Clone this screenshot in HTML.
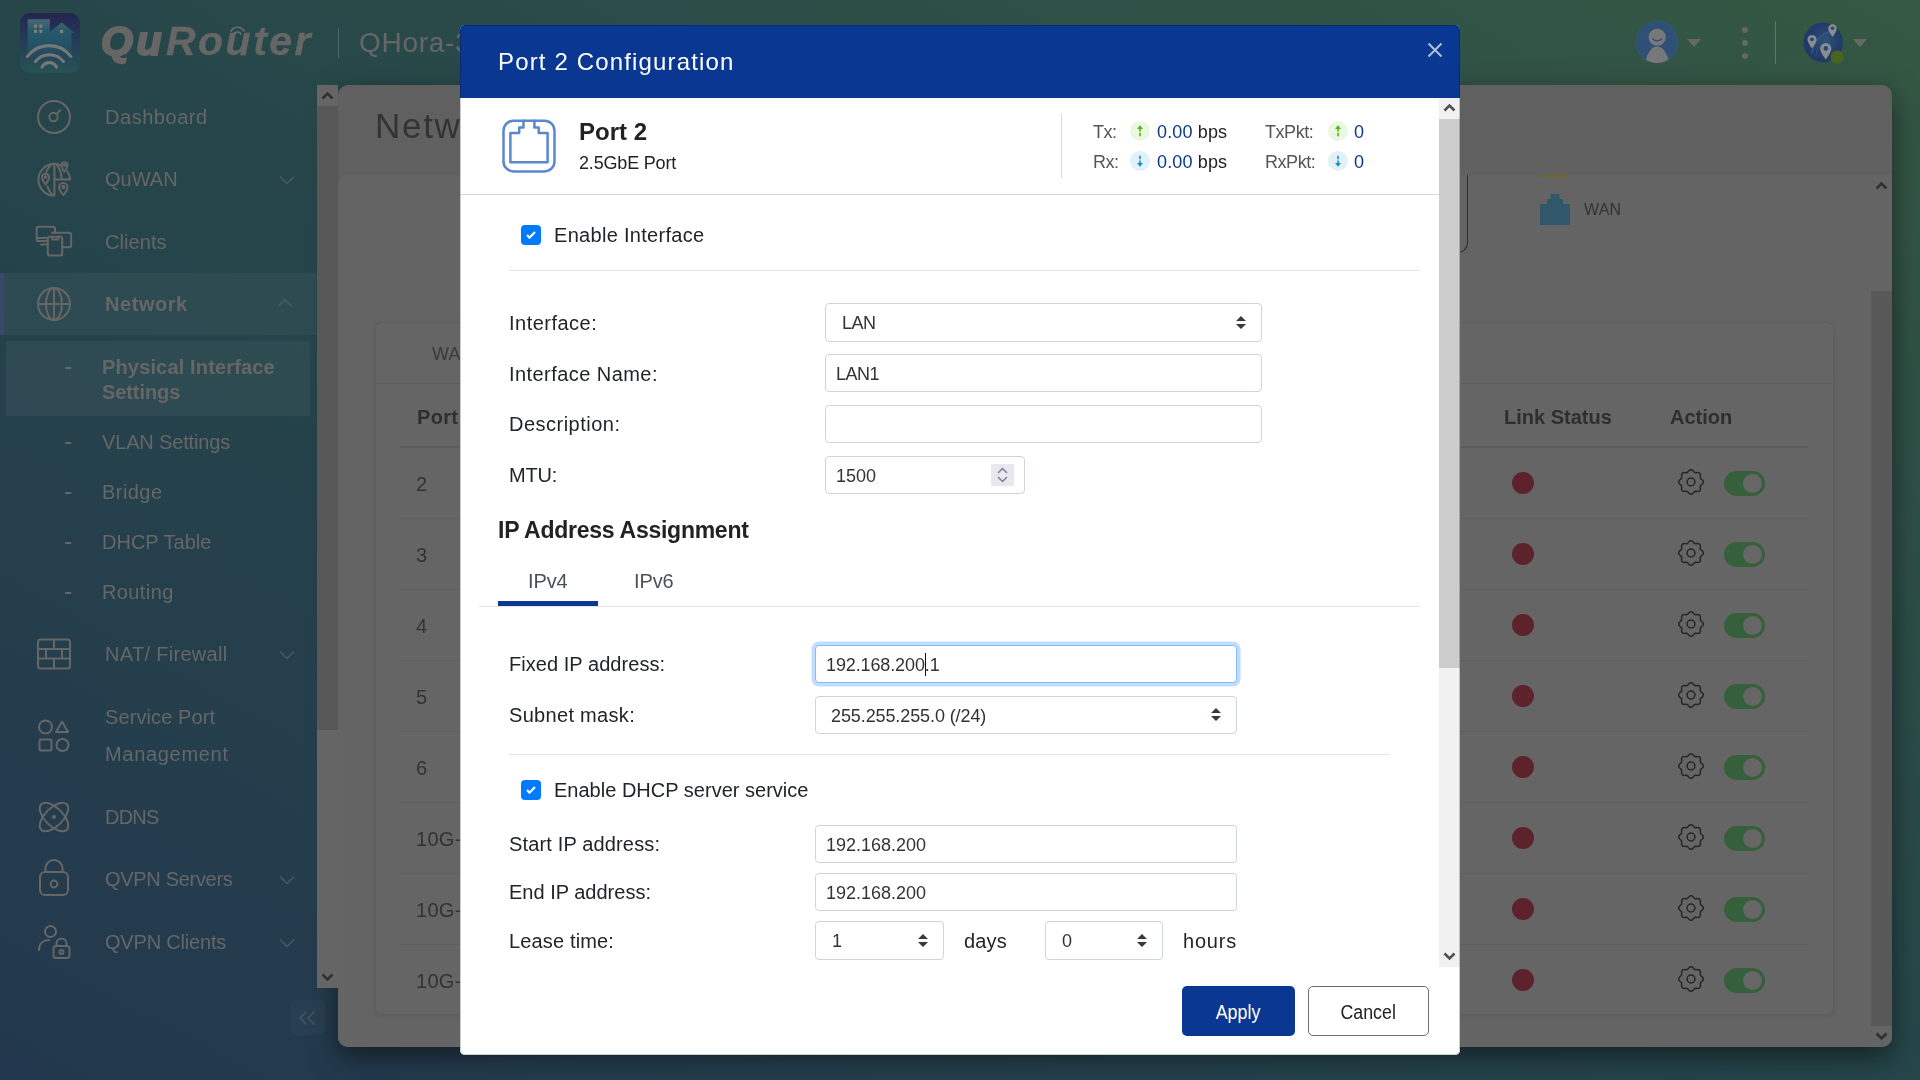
<!DOCTYPE html>
<html lang="en"><head><meta charset="utf-8"><title>QuRouter - Port 2 Configuration</title>
<style>
*{box-sizing:border-box;margin:0;padding:0}
html,body{width:1920px;height:1080px;overflow:hidden}
body{font-family:"Liberation Sans",sans-serif;position:relative;background:#26424b;color:#222}
.abs{position:absolute}
#bg{left:0;top:0;width:1920px;height:1080px;background:linear-gradient(to top right,#23384e 0%,#26464a 50%,#355843 100%)}
/* ---------- top bar ---------- */
.t{position:absolute;white-space:nowrap;line-height:1;will-change:transform}
/* ---------- sidebar ---------- */
.nav{color:#666;font-size:20px;letter-spacing:.55px}
.sub{color:#666;font-size:20px;letter-spacing:.3px}
/* ---------- main panel ---------- */
#panel{left:338px;top:85px;width:1554px;height:962px;background:#606060;border-radius:10px;box-shadow:0 10px 28px rgba(0,0,0,.5)}
#inner{left:338px;top:175px;width:1533px;height:872px;background:#646464;border-radius:10px 0 0 10px}
#card{left:375px;top:322px;width:1459px;height:693px;background:#656565;border:1px solid #5e5e5e;border-radius:6px;box-shadow:0 1px 4px rgba(0,0,0,.08)}
/* ---------- modal ---------- */
#modal{left:460px;top:25px;width:1000px;height:1030px;background:#fff;border-radius:5px;overflow:hidden}
#mhead{left:0;top:0;width:1000px;height:73px;background:#0a3791}
.lbl{font-size:20px;color:#212529;letter-spacing:.35px}
.inp{will-change:transform;position:absolute;height:38px;border:1px solid #ced4da;border-radius:4px;background:#fff;font-size:18px;color:#333;line-height:38px;padding-left:10px;white-space:nowrap}
.hr{position:absolute;height:1px;background:#e3e5e7}
.cb{position:absolute;width:20px;height:20px;border-radius:4px;background:#007bff}
.cb svg{display:block}
.car{position:absolute;right:15px;top:12px}
.btn{border-radius:5px;font-size:20px;text-align:center;line-height:50px}
.btn span{display:inline-block;transform:scaleX(.89);position:relative;top:1px}
</style></head><body>
<div id="bg" class="abs"></div>
<!--TOPBAR-->
<!-- logo icon -->
<svg class="abs" style="left:20px;top:13px" width="60" height="60" viewBox="0 0 60 60">
 <defs><linearGradient id="lg1" x1="0" y1="0" x2="0" y2="1"><stop offset="0" stop-color="#24254f"/><stop offset=".45" stop-color="#243b58"/><stop offset="1" stop-color="#265355"/></linearGradient>
 <linearGradient id="lg2" x1="0" y1="0" x2="0" y2="1"><stop offset="0" stop-color="#466a70"/><stop offset=".3" stop-color="#24596b"/><stop offset=".75" stop-color="#234d63"/><stop offset="1" stop-color="#244a5a" stop-opacity="0"/></linearGradient></defs>
 <rect width="60" height="60" rx="10" fill="url(#lg1)"/>
 <path d="M7.700 6.200h22.200v12.500l11.800-9.300 12.900 10.700h-3.100v28H7.700z" fill="url(#lg2)"/>
 <g fill="#857d7a"><rect x="14" y="11.500" width="3" height="3.200" rx=".8"/><rect x="19.300" y="11.500" width="3" height="3.200" rx=".8"/><rect x="14" y="16.800" width="3" height="3.200" rx=".8"/><rect x="19.300" y="16.800" width="3" height="3.200" rx=".8"/><rect x="40" y="16.800" width="3.200" height="3.400" rx=".8"/></g>
 <g fill="none" stroke="#767777" stroke-width="3.100" stroke-linecap="round"><path d="M7.400 43.400a27.200 27.200 0 0 1 43.400 0"/><path d="M15.300 48.600a17.900 17.900 0 0 1 28.200 0"/><path d="M22 54.200a8 8 0 0 1 14.500 0"/></g>
</svg>
<div id="logo" class="t" style="left:101px;top:21px;font-size:41px;font-weight:700;font-style:italic;color:#666;letter-spacing:2.5px"><span id="lq" style="-webkit-text-stroke:2.200px #666;letter-spacing:3.5px">Qu</span><span id="lr" style="-webkit-text-stroke:.3px #666;margin-left:1px">Ro<span id="lu">u</span>ter</span></div>
<svg class="abs" style="left:222px;top:23px" width="30" height="14" viewBox="0 0 30 14"><g fill="none" stroke="#6c6f70" stroke-width="1.6" stroke-linecap="round"><path d="M9 8a7.500 7.500 0 0 1 13 0"/><path d="M12 11a4 4 0 0 1 7 0"/></g></svg>
<div class="abs" style="left:338px;top:28px;width:1px;height:30px;background:#4d6668"></div>
<div class="t" style="left:359px;top:29px;font-size:28px;color:#666;letter-spacing:.7px">QHora-301W</div>
<!-- right icons -->
<svg class="abs" style="left:1634px;top:19px" width="46" height="46" viewBox="0 0 46 46">
 <defs><clipPath id="cu"><circle cx="23" cy="23" r="21"/></clipPath><radialGradient id="ug" cx=".5" cy=".5" r=".5"><stop offset="0" stop-color="#2f4f75"/><stop offset=".9" stop-color="#2f5077"/><stop offset="1" stop-color="#315a7a" stop-opacity=".75"/></radialGradient></defs>
 <circle cx="23" cy="23" r="21.500" fill="url(#ug)"/>
 <g clip-path="url(#cu)" fill="#777879"><circle cx="23.200" cy="18.200" r="8.600"/><path d="M23.200 27.500c5.500 0 9 4.500 12.800 17.500h-25.600c3.800-13 7.300-17.500 12.800-17.500z"/></g>
 <path d="M18.800 20q4.400 3.800 8.800 0" fill="none" stroke="#2f4f75" stroke-width="1.300" stroke-linecap="round"/>
</svg>
<svg class="abs" style="left:1687px;top:39px" width="14" height="8" viewBox="0 0 14 8"><path d="M0 0h14l-7 8z" fill="#646966"/></svg>
<div class="abs" style="left:1742px;top:27px;width:6px;height:6px;border-radius:3px;background:#666"></div>
<div class="abs" style="left:1742px;top:40px;width:6px;height:6px;border-radius:3px;background:#666"></div>
<div class="abs" style="left:1742px;top:53px;width:6px;height:6px;border-radius:3px;background:#666"></div>
<div class="abs" style="left:1775px;top:21px;width:1px;height:43px;background:#66756b"></div>
<svg class="abs" style="left:1801px;top:20px" width="46" height="46" viewBox="0 0 46 46">
 <defs><radialGradient id="gg" cx=".55" cy=".45" r=".6"><stop offset="0" stop-color="#2a5478"/><stop offset=".55" stop-color="#243f6c"/><stop offset="1" stop-color="#1f3662"/></radialGradient></defs>
 <circle cx="22.200" cy="22.400" r="19.800" fill="url(#gg)"/>
 <path d="M11 33c2-12 9-20 22-22" fill="none" stroke="#36587f" stroke-width="1.600" stroke-linecap="round"/>
 <path d="M15 36c1-10 7-17 17-19" fill="none" stroke="#2f4f78" stroke-width="1.200" stroke-linecap="round"/>
 <g fill="#8a8c8e"><path d="M6.500 19.500a4.500 4.500 0 1 1 9 0c0 3.200-4.500 9-4.500 9s-4.500-5.800-4.500-9z"/><path d="M27.200 8.500a4.300 4.300 0 1 1 8.600 0c0 3-4.300 8.300-4.300 8.300s-4.300-5.300-4.300-8.300z"/><path d="M19.200 28.600a5.600 5.600 0 1 1 11.200 0c0 4-5.600 11-5.600 11s-5.600-7-5.600-11z"/></g>
 <g fill="#24487a"><circle cx="11" cy="19.300" r="1.900"/><circle cx="31.500" cy="8.300" r="1.800"/><circle cx="24.800" cy="28.400" r="2.300"/></g>
 <circle cx="36.200" cy="37" r="6.600" fill="#48651f"/>
</svg>
<svg class="abs" style="left:1853px;top:39px" width="14" height="8" viewBox="0 0 14 8"><path d="M0 0h14l-7 8z" fill="#646966"/></svg>
<!--/TOPBAR-->
<!--SIDEBAR-->
<div class="abs" style="left:0;top:273px;width:317px;height:62px;background:rgba(255,255,255,.04)"></div>
<div class="abs" style="left:0;top:273px;width:4px;height:62px;background:#3a4768"></div>
<div class="abs" style="left:6px;top:341px;width:304px;height:75px;background:rgba(255,255,255,.045)"></div>
<!-- icons -->
<svg class="abs" style="left:34px;top:97px" width="40" height="40" viewBox="0 0 40 40" fill="none" stroke="#666" stroke-width="2" stroke-linecap="round"><circle cx="20" cy="20" r="16"/><circle cx="19.500" cy="20" r="4.200"/><path d="M22.500 17l4-4"/></svg>
<svg class="abs" style="left:34px;top:159px" width="42" height="40" viewBox="0 0 42 40" fill="none" stroke="#666" stroke-width="2" stroke-linecap="round" stroke-linejoin="round"><path d="M20.400 4.800a15.900 15.900 0 0 0 0 31.800z"/><path d="M17.500 5.500c-3.500 3-5 6-5.300 8.500M13.500 27.500c.8 3 2.200 5.700 4.500 8"/><path d="M20.400 4.800c2.500 0 5 .6 7 1.700M33.300 12.300c1.800 2.400 2.800 5.200 3 8.300h-15.900"/><path d="M22.500 5.500c3 3.500 5 8.500 5.200 15"/><path d="M8.100 18.200a3.500 3.500 0 1 1 7 0c0 2.700-3.500 7.200-3.500 7.200s-3.500-4.500-3.500-7.200z"/><circle cx="11.600" cy="18.200" r=".9"/><path d="M27.300 6.300a3.100 3.100 0 1 1 6.200 0c0 2.400-3.100 6.400-3.100 6.400s-3.100-4-3.100-6.400z"/><circle cx="30.400" cy="6.300" r=".8"/><path d="M25.100 28.200a4.200 4.200 0 1 1 8.400 0c0 3.200-4.200 7.800-4.200 7.800s-4.200-4.600-4.200-7.800z"/><circle cx="29.300" cy="28.200" r="1.100"/></svg>
<svg class="abs" style="left:34px;top:223px" width="40" height="36" viewBox="0 0 40 36" fill="none" stroke="#666" stroke-width="2" stroke-linecap="round" stroke-linejoin="round"><path d="M13.500 18H4.500a1.800 1.800 0 0 1-1.800-1.800V5.500a1.800 1.800 0 0 1 1.800-1.800h14.700a1.800 1.800 0 0 1 1.800 1.800v4"/><path d="M3 15h10.500"/><path d="M7 21.400h6.500"/><path d="M18 9.800h17.300a1.800 1.800 0 0 1 1.800 1.800v10.800a1.800 1.800 0 0 1-1.800 1.800h-6.800"/><rect x="13.800" y="13.700" width="14.400" height="18.900" rx="2"/><path d="M18.200 13.700v2.700h6.100v-2.700"/></svg>
<svg class="abs" style="left:34px;top:284px" width="40" height="40" viewBox="0 0 40 40" fill="none" stroke="#666" stroke-width="2" stroke-linecap="round"><circle cx="20" cy="20" r="16"/><ellipse cx="20" cy="20" rx="8" ry="16"/><path d="M20 4v32M4 20h32"/></svg>
<svg class="abs" style="left:34px;top:635px" width="40" height="38" viewBox="0 0 40 38" fill="none" stroke="#666" stroke-width="2" stroke-linecap="round" stroke-linejoin="round"><rect x="4" y="4.500" width="32" height="29" rx="2.500"/><path d="M4 14h32M4 23.500h32M20 4.500V14M12 14v9.500M28 14v9.500M20 23.500v10"/></svg>
<svg class="abs" style="left:34px;top:716px" width="40" height="40" viewBox="0 0 40 40" fill="none" stroke="#666" stroke-width="2" stroke-linecap="round" stroke-linejoin="round"><circle cx="11.500" cy="11" r="6.500"/><path d="M28 5.500l6 10.500H22z"/><rect x="5.500" y="23.500" width="12" height="11" rx="1.500"/><circle cx="28.500" cy="29" r="6"/></svg>
<svg class="abs" style="left:34px;top:797px" width="40" height="40" viewBox="0 0 40 40" fill="none" stroke="#666" stroke-width="2"><ellipse cx="20" cy="20" rx="18" ry="9" transform="rotate(45 20 20)"/><ellipse cx="20" cy="20" rx="18" ry="9" transform="rotate(-45 20 20)"/><circle cx="20" cy="20" r="2" fill="#666" stroke="none"/></svg>
<svg class="abs" style="left:34px;top:857px" width="40" height="42" viewBox="0 0 40 42" fill="none" stroke="#666" stroke-width="2" stroke-linecap="round"><rect x="6" y="15" width="28" height="23" rx="5"/><path d="M11.500 15v-3.500a8.500 8.500 0 0 1 17 0V15"/><circle cx="20" cy="27" r="3.400"/></svg>
<svg class="abs" style="left:34px;top:922px" width="42" height="40" viewBox="0 0 42 40" fill="none" stroke="#666" stroke-width="2" stroke-linecap="round"><circle cx="16.500" cy="9.500" r="5.500"/><path d="M5 28c0-7 4.500-10 10-10"/><rect x="19.500" y="24" width="16" height="12" rx="2.500"/><path d="M22.500 24v-2.500a5 5 0 0 1 10 0V24"/><circle cx="27.500" cy="30" r="2"/></svg>
<!-- chevrons -->
<svg class="abs" style="left:279px;top:175px" width="16" height="10" viewBox="0 0 16 10" fill="none" stroke="#4b5b5f" stroke-width="1.500"><path d="M1 1.500l7 7 7-7"/></svg>
<svg class="abs" style="left:277px;top:297.500px" width="16" height="10" viewBox="0 0 16 10" fill="none" stroke="#4b5b5f" stroke-width="1.500"><path d="M1 8.500l7-7 7 7"/></svg>
<svg class="abs" style="left:279px;top:650px" width="16" height="10" viewBox="0 0 16 10" fill="none" stroke="#4b5b5f" stroke-width="1.500"><path d="M1 1.500l7 7 7-7"/></svg>
<svg class="abs" style="left:279px;top:875px" width="16" height="10" viewBox="0 0 16 10" fill="none" stroke="#4b5b5f" stroke-width="1.500"><path d="M1 1.500l7 7 7-7"/></svg>
<svg class="abs" style="left:279px;top:938px" width="16" height="10" viewBox="0 0 16 10" fill="none" stroke="#4b5b5f" stroke-width="1.500"><path d="M1 1.500l7 7 7-7"/></svg>
<!-- labels -->
<div class="t nav" style="left:105px;top:107px;letter-spacing:0.54px">Dashboard</div>
<div class="t nav" style="left:105px;top:169px;letter-spacing:0.02px">QuWAN</div>
<div class="t nav" style="left:105px;top:232px;letter-spacing:0.08px">Clients</div>
<div class="t nav" style="left:105px;top:294px;font-weight:700;letter-spacing:0.55px">Network</div>
<div class="t sub" style="left:64px;top:354px;font-size:25px">-</div>
<div class="t sub" style="left:102px;top:357px;font-weight:700;letter-spacing:0.15px">Physical Interface</div>
<div class="t sub" style="left:102px;top:382px;font-weight:700;letter-spacing:-0.09px">Settings</div>
<div class="t sub" style="left:64px;top:429px;font-size:25px">-</div><div class="t sub" style="left:102px;top:432px;letter-spacing:-0.15px">VLAN Settings</div>
<div class="t sub" style="left:64px;top:479px;font-size:25px">-</div><div class="t sub" style="left:102px;top:482px;letter-spacing:0.44px">Bridge</div>
<div class="t sub" style="left:64px;top:529px;font-size:25px">-</div><div class="t sub" style="left:102px;top:532px;letter-spacing:-0.0px">DHCP Table</div>
<div class="t sub" style="left:64px;top:579px;font-size:25px">-</div><div class="t sub" style="left:102px;top:582px;letter-spacing:0.39px">Routing</div>
<div class="t nav" style="left:105px;top:644px;letter-spacing:0.31px">NAT/ Firewall</div>
<div class="t nav" style="left:105px;top:707px;letter-spacing:0.1px">Service Port</div>
<div class="t nav" style="left:105px;top:744px;letter-spacing:0.69px">Management</div>
<div class="t nav" style="left:105px;top:807px;letter-spacing:-0.79px">DDNS</div>
<div class="t nav" style="left:105px;top:869px;letter-spacing:-0.31px">QVPN Servers</div>
<div class="t nav" style="left:105px;top:932px;letter-spacing:-0.19px">QVPN Clients</div>
<!-- collapse -->
<div class="abs" style="left:291px;top:1000px;width:34px;height:35px;border-radius:5px;background:rgba(255,255,255,.025)"></div>
<svg class="abs" style="left:298px;top:1010px" width="20" height="16" viewBox="0 0 20 16" fill="none" stroke="#41565f" stroke-width="1.500"><path d="M8.500 1.500l-6.500 6.500 6.500 6.500M16.500 1.500l-6.500 6.500 6.500 6.500"/></svg>
<!--/SIDEBAR-->
<!--MAIN-->
<div id="panel" class="abs"></div><div id="inner" class="abs"></div>
<div class="t" style="left:375px;top:108px;font-size:35px;color:#333;letter-spacing:1.7px">Network</div>
<div class="abs" style="left:1871px;top:175px;width:21px;height:872px;background:#646464;border-radius:0 0 10px 0"></div>
<div class="abs" style="left:1871px;top:291px;width:21px;height:735px;background:#585858"></div>
<svg class="abs" style="left:1875px;top:180px" width="13" height="10" viewBox="0 0 13 10" fill="none" stroke="#303030" stroke-width="2.600"><path d="M1.500 8.500l5-5 5 5"/></svg>
<svg class="abs" style="left:1875px;top:1032px" width="13" height="10" viewBox="0 0 13 10" fill="none" stroke="#303030" stroke-width="2.600"><path d="M1.500 1.500l5 5 5-5"/></svg>
<div class="abs" style="left:1300px;top:175px;width:168px;height:78px;border:1px solid #2f2f2f;border-radius:0 0 10px 0;border-top:0;border-left:0"></div>
<div class="abs" style="left:1540px;top:175px;width:30px;height:2px;background:#6e6524"></div>
<svg class="abs" style="left:1540px;top:194px" width="30" height="31" viewBox="0 0 30 31"><path d="M10.500 0h9v5h3.500v5h7v21H0V10h7V5h3.500z" fill="#30586a"/></svg>
<div class="t" style="left:1584px;top:202px;font-size:16px;color:#333;letter-spacing:.2px">WAN</div>
<div id="card" class="abs"></div>
<div class="abs" style="left:376px;top:383px;width:1457px;height:1px;background:#5c5c5c"></div>
<div class="t" style="left:432px;top:345px;font-size:18px;color:#3a3a3a;letter-spacing:.3px">WAN</div>
<div class="t" style="left:417px;top:407px;font-size:20px;font-weight:700;color:#2e2e2e;letter-spacing:.3px">Port</div>
<div class="t" style="left:1504px;top:407px;font-size:20px;font-weight:700;color:#2e2e2e">Link Status</div>
<div class="t" style="left:1670px;top:407px;font-size:20px;font-weight:700;color:#2e2e2e">Action</div>
<div class="abs" style="left:400px;top:446px;width:1408px;height:2px;background:#5c5c5c"></div>
<div class="t" style="left:416px;top:474px;font-size:20px;color:#333;letter-spacing:.3px">2</div>
<div class="abs" style="left:1512px;top:472px;width:22px;height:22px;border-radius:11px;background:#5c232c"></div>
<svg class="abs" style="left:1675.900px;top:467.200px" width="30" height="30" viewBox="0 0 30 30" fill="none" stroke="#262626" stroke-width="1.500" stroke-linejoin="round"><path d="M15.00 2.65L15.80 2.82L16.54 3.28L17.20 3.92L17.79 4.59L18.34 5.16L18.92 5.53L19.60 5.68L20.39 5.67L21.28 5.60L22.20 5.62L23.05 5.82L23.73 6.27L24.18 6.95L24.38 7.80L24.40 8.72L24.33 9.61L24.32 10.40L24.47 11.08L24.84 11.66L25.41 12.21L26.08 12.80L26.72 13.46L27.18 14.20L27.35 15.00L27.18 15.80L26.72 16.54L26.08 17.20L25.41 17.79L24.84 18.34L24.47 18.92L24.32 19.60L24.33 20.39L24.40 21.28L24.38 22.20L24.18 23.05L23.73 23.73L23.05 24.18L22.20 24.38L21.28 24.40L20.39 24.33L19.60 24.32L18.92 24.47L18.34 24.84L17.79 25.41L17.20 26.08L16.54 26.72L15.80 27.18L15.00 27.35L14.20 27.18L13.46 26.72L12.80 26.08L12.21 25.41L11.66 24.84L11.08 24.47L10.40 24.32L9.61 24.33L8.72 24.40L7.80 24.38L6.95 24.18L6.27 23.73L5.82 23.05L5.62 22.20L5.60 21.28L5.67 20.39L5.68 19.60L5.53 18.92L5.16 18.34L4.59 17.79L3.92 17.20L3.28 16.54L2.82 15.80L2.65 15.00L2.82 14.20L3.28 13.46L3.92 12.80L4.59 12.21L5.16 11.66L5.53 11.08L5.68 10.40L5.67 9.61L5.60 8.72L5.62 7.80L5.82 6.95L6.27 6.27L6.95 5.82L7.80 5.62L8.72 5.60L9.61 5.67L10.40 5.68L11.08 5.53L11.66 5.16L12.21 4.59L12.80 3.92L13.46 3.28L14.20 2.82z"/><circle cx="15" cy="15" r="3.900"/></svg>
<div class="abs" style="left:1724px;top:471px;width:41px;height:25px;border-radius:13px;background:#365f3b"><div class="abs" style="left:19px;top:3px;width:19px;height:19px;border-radius:10px;background:#666"></div></div>
<div class="abs" style="left:400px;top:518px;width:1408px;height:1px;background:#5d5d5d"></div>
<div class="t" style="left:416px;top:545px;font-size:20px;color:#333;letter-spacing:.3px">3</div>
<div class="abs" style="left:1512px;top:543px;width:22px;height:22px;border-radius:11px;background:#5c232c"></div>
<svg class="abs" style="left:1675.900px;top:538.200px" width="30" height="30" viewBox="0 0 30 30" fill="none" stroke="#262626" stroke-width="1.500" stroke-linejoin="round"><path d="M15.00 2.65L15.80 2.82L16.54 3.28L17.20 3.92L17.79 4.59L18.34 5.16L18.92 5.53L19.60 5.68L20.39 5.67L21.28 5.60L22.20 5.62L23.05 5.82L23.73 6.27L24.18 6.95L24.38 7.80L24.40 8.72L24.33 9.61L24.32 10.40L24.47 11.08L24.84 11.66L25.41 12.21L26.08 12.80L26.72 13.46L27.18 14.20L27.35 15.00L27.18 15.80L26.72 16.54L26.08 17.20L25.41 17.79L24.84 18.34L24.47 18.92L24.32 19.60L24.33 20.39L24.40 21.28L24.38 22.20L24.18 23.05L23.73 23.73L23.05 24.18L22.20 24.38L21.28 24.40L20.39 24.33L19.60 24.32L18.92 24.47L18.34 24.84L17.79 25.41L17.20 26.08L16.54 26.72L15.80 27.18L15.00 27.35L14.20 27.18L13.46 26.72L12.80 26.08L12.21 25.41L11.66 24.84L11.08 24.47L10.40 24.32L9.61 24.33L8.72 24.40L7.80 24.38L6.95 24.18L6.27 23.73L5.82 23.05L5.62 22.20L5.60 21.28L5.67 20.39L5.68 19.60L5.53 18.92L5.16 18.34L4.59 17.79L3.92 17.20L3.28 16.54L2.82 15.80L2.65 15.00L2.82 14.20L3.28 13.46L3.92 12.80L4.59 12.21L5.16 11.66L5.53 11.08L5.68 10.40L5.67 9.61L5.60 8.72L5.62 7.80L5.82 6.95L6.27 6.27L6.95 5.82L7.80 5.62L8.72 5.60L9.61 5.67L10.40 5.68L11.08 5.53L11.66 5.16L12.21 4.59L12.80 3.92L13.46 3.28L14.20 2.82z"/><circle cx="15" cy="15" r="3.900"/></svg>
<div class="abs" style="left:1724px;top:542px;width:41px;height:25px;border-radius:13px;background:#365f3b"><div class="abs" style="left:19px;top:3px;width:19px;height:19px;border-radius:10px;background:#666"></div></div>
<div class="abs" style="left:400px;top:589px;width:1408px;height:1px;background:#5d5d5d"></div>
<div class="t" style="left:416px;top:616px;font-size:20px;color:#333;letter-spacing:.3px">4</div>
<div class="abs" style="left:1512px;top:614px;width:22px;height:22px;border-radius:11px;background:#5c232c"></div>
<svg class="abs" style="left:1675.900px;top:609.200px" width="30" height="30" viewBox="0 0 30 30" fill="none" stroke="#262626" stroke-width="1.500" stroke-linejoin="round"><path d="M15.00 2.65L15.80 2.82L16.54 3.28L17.20 3.92L17.79 4.59L18.34 5.16L18.92 5.53L19.60 5.68L20.39 5.67L21.28 5.60L22.20 5.62L23.05 5.82L23.73 6.27L24.18 6.95L24.38 7.80L24.40 8.72L24.33 9.61L24.32 10.40L24.47 11.08L24.84 11.66L25.41 12.21L26.08 12.80L26.72 13.46L27.18 14.20L27.35 15.00L27.18 15.80L26.72 16.54L26.08 17.20L25.41 17.79L24.84 18.34L24.47 18.92L24.32 19.60L24.33 20.39L24.40 21.28L24.38 22.20L24.18 23.05L23.73 23.73L23.05 24.18L22.20 24.38L21.28 24.40L20.39 24.33L19.60 24.32L18.92 24.47L18.34 24.84L17.79 25.41L17.20 26.08L16.54 26.72L15.80 27.18L15.00 27.35L14.20 27.18L13.46 26.72L12.80 26.08L12.21 25.41L11.66 24.84L11.08 24.47L10.40 24.32L9.61 24.33L8.72 24.40L7.80 24.38L6.95 24.18L6.27 23.73L5.82 23.05L5.62 22.20L5.60 21.28L5.67 20.39L5.68 19.60L5.53 18.92L5.16 18.34L4.59 17.79L3.92 17.20L3.28 16.54L2.82 15.80L2.65 15.00L2.82 14.20L3.28 13.46L3.92 12.80L4.59 12.21L5.16 11.66L5.53 11.08L5.68 10.40L5.67 9.61L5.60 8.72L5.62 7.80L5.82 6.95L6.27 6.27L6.95 5.82L7.80 5.62L8.72 5.60L9.61 5.67L10.40 5.68L11.08 5.53L11.66 5.16L12.21 4.59L12.80 3.92L13.46 3.28L14.20 2.82z"/><circle cx="15" cy="15" r="3.900"/></svg>
<div class="abs" style="left:1724px;top:613px;width:41px;height:25px;border-radius:13px;background:#365f3b"><div class="abs" style="left:19px;top:3px;width:19px;height:19px;border-radius:10px;background:#666"></div></div>
<div class="abs" style="left:400px;top:660px;width:1408px;height:1px;background:#5d5d5d"></div>
<div class="t" style="left:416px;top:687px;font-size:20px;color:#333;letter-spacing:.3px">5</div>
<div class="abs" style="left:1512px;top:685px;width:22px;height:22px;border-radius:11px;background:#5c232c"></div>
<svg class="abs" style="left:1675.900px;top:680.200px" width="30" height="30" viewBox="0 0 30 30" fill="none" stroke="#262626" stroke-width="1.500" stroke-linejoin="round"><path d="M15.00 2.65L15.80 2.82L16.54 3.28L17.20 3.92L17.79 4.59L18.34 5.16L18.92 5.53L19.60 5.68L20.39 5.67L21.28 5.60L22.20 5.62L23.05 5.82L23.73 6.27L24.18 6.95L24.38 7.80L24.40 8.72L24.33 9.61L24.32 10.40L24.47 11.08L24.84 11.66L25.41 12.21L26.08 12.80L26.72 13.46L27.18 14.20L27.35 15.00L27.18 15.80L26.72 16.54L26.08 17.20L25.41 17.79L24.84 18.34L24.47 18.92L24.32 19.60L24.33 20.39L24.40 21.28L24.38 22.20L24.18 23.05L23.73 23.73L23.05 24.18L22.20 24.38L21.28 24.40L20.39 24.33L19.60 24.32L18.92 24.47L18.34 24.84L17.79 25.41L17.20 26.08L16.54 26.72L15.80 27.18L15.00 27.35L14.20 27.18L13.46 26.72L12.80 26.08L12.21 25.41L11.66 24.84L11.08 24.47L10.40 24.32L9.61 24.33L8.72 24.40L7.80 24.38L6.95 24.18L6.27 23.73L5.82 23.05L5.62 22.20L5.60 21.28L5.67 20.39L5.68 19.60L5.53 18.92L5.16 18.34L4.59 17.79L3.92 17.20L3.28 16.54L2.82 15.80L2.65 15.00L2.82 14.20L3.28 13.46L3.92 12.80L4.59 12.21L5.16 11.66L5.53 11.08L5.68 10.40L5.67 9.61L5.60 8.72L5.62 7.80L5.82 6.95L6.27 6.27L6.95 5.82L7.80 5.62L8.72 5.60L9.61 5.67L10.40 5.68L11.08 5.53L11.66 5.16L12.21 4.59L12.80 3.92L13.46 3.28L14.20 2.82z"/><circle cx="15" cy="15" r="3.900"/></svg>
<div class="abs" style="left:1724px;top:684px;width:41px;height:25px;border-radius:13px;background:#365f3b"><div class="abs" style="left:19px;top:3px;width:19px;height:19px;border-radius:10px;background:#666"></div></div>
<div class="abs" style="left:400px;top:731px;width:1408px;height:1px;background:#5d5d5d"></div>
<div class="t" style="left:416px;top:758px;font-size:20px;color:#333;letter-spacing:.3px">6</div>
<div class="abs" style="left:1512px;top:756px;width:22px;height:22px;border-radius:11px;background:#5c232c"></div>
<svg class="abs" style="left:1675.900px;top:751.200px" width="30" height="30" viewBox="0 0 30 30" fill="none" stroke="#262626" stroke-width="1.500" stroke-linejoin="round"><path d="M15.00 2.65L15.80 2.82L16.54 3.28L17.20 3.92L17.79 4.59L18.34 5.16L18.92 5.53L19.60 5.68L20.39 5.67L21.28 5.60L22.20 5.62L23.05 5.82L23.73 6.27L24.18 6.95L24.38 7.80L24.40 8.72L24.33 9.61L24.32 10.40L24.47 11.08L24.84 11.66L25.41 12.21L26.08 12.80L26.72 13.46L27.18 14.20L27.35 15.00L27.18 15.80L26.72 16.54L26.08 17.20L25.41 17.79L24.84 18.34L24.47 18.92L24.32 19.60L24.33 20.39L24.40 21.28L24.38 22.20L24.18 23.05L23.73 23.73L23.05 24.18L22.20 24.38L21.28 24.40L20.39 24.33L19.60 24.32L18.92 24.47L18.34 24.84L17.79 25.41L17.20 26.08L16.54 26.72L15.80 27.18L15.00 27.35L14.20 27.18L13.46 26.72L12.80 26.08L12.21 25.41L11.66 24.84L11.08 24.47L10.40 24.32L9.61 24.33L8.72 24.40L7.80 24.38L6.95 24.18L6.27 23.73L5.82 23.05L5.62 22.20L5.60 21.28L5.67 20.39L5.68 19.60L5.53 18.92L5.16 18.34L4.59 17.79L3.92 17.20L3.28 16.54L2.82 15.80L2.65 15.00L2.82 14.20L3.28 13.46L3.92 12.80L4.59 12.21L5.16 11.66L5.53 11.08L5.68 10.40L5.67 9.61L5.60 8.72L5.62 7.80L5.82 6.95L6.27 6.27L6.95 5.82L7.80 5.62L8.72 5.60L9.61 5.67L10.40 5.68L11.08 5.53L11.66 5.16L12.21 4.59L12.80 3.92L13.46 3.28L14.20 2.82z"/><circle cx="15" cy="15" r="3.900"/></svg>
<div class="abs" style="left:1724px;top:755px;width:41px;height:25px;border-radius:13px;background:#365f3b"><div class="abs" style="left:19px;top:3px;width:19px;height:19px;border-radius:10px;background:#666"></div></div>
<div class="abs" style="left:400px;top:802px;width:1408px;height:1px;background:#5d5d5d"></div>
<div class="t" style="left:416px;top:829px;font-size:20px;color:#333;letter-spacing:.3px">10G-1</div>
<div class="abs" style="left:1512px;top:827px;width:22px;height:22px;border-radius:11px;background:#5c232c"></div>
<svg class="abs" style="left:1675.900px;top:822.200px" width="30" height="30" viewBox="0 0 30 30" fill="none" stroke="#262626" stroke-width="1.500" stroke-linejoin="round"><path d="M15.00 2.65L15.80 2.82L16.54 3.28L17.20 3.92L17.79 4.59L18.34 5.16L18.92 5.53L19.60 5.68L20.39 5.67L21.28 5.60L22.20 5.62L23.05 5.82L23.73 6.27L24.18 6.95L24.38 7.80L24.40 8.72L24.33 9.61L24.32 10.40L24.47 11.08L24.84 11.66L25.41 12.21L26.08 12.80L26.72 13.46L27.18 14.20L27.35 15.00L27.18 15.80L26.72 16.54L26.08 17.20L25.41 17.79L24.84 18.34L24.47 18.92L24.32 19.60L24.33 20.39L24.40 21.28L24.38 22.20L24.18 23.05L23.73 23.73L23.05 24.18L22.20 24.38L21.28 24.40L20.39 24.33L19.60 24.32L18.92 24.47L18.34 24.84L17.79 25.41L17.20 26.08L16.54 26.72L15.80 27.18L15.00 27.35L14.20 27.18L13.46 26.72L12.80 26.08L12.21 25.41L11.66 24.84L11.08 24.47L10.40 24.32L9.61 24.33L8.72 24.40L7.80 24.38L6.95 24.18L6.27 23.73L5.82 23.05L5.62 22.20L5.60 21.28L5.67 20.39L5.68 19.60L5.53 18.92L5.16 18.34L4.59 17.79L3.92 17.20L3.28 16.54L2.82 15.80L2.65 15.00L2.82 14.20L3.28 13.46L3.92 12.80L4.59 12.21L5.16 11.66L5.53 11.08L5.68 10.40L5.67 9.61L5.60 8.72L5.62 7.80L5.82 6.95L6.27 6.27L6.95 5.82L7.80 5.62L8.72 5.60L9.61 5.67L10.40 5.68L11.08 5.53L11.66 5.16L12.21 4.59L12.80 3.92L13.46 3.28L14.20 2.82z"/><circle cx="15" cy="15" r="3.900"/></svg>
<div class="abs" style="left:1724px;top:826px;width:41px;height:25px;border-radius:13px;background:#365f3b"><div class="abs" style="left:19px;top:3px;width:19px;height:19px;border-radius:10px;background:#666"></div></div>
<div class="abs" style="left:400px;top:873px;width:1408px;height:1px;background:#5d5d5d"></div>
<div class="t" style="left:416px;top:900px;font-size:20px;color:#333;letter-spacing:.3px">10G-2</div>
<div class="abs" style="left:1512px;top:898px;width:22px;height:22px;border-radius:11px;background:#5c232c"></div>
<svg class="abs" style="left:1675.900px;top:893.200px" width="30" height="30" viewBox="0 0 30 30" fill="none" stroke="#262626" stroke-width="1.500" stroke-linejoin="round"><path d="M15.00 2.65L15.80 2.82L16.54 3.28L17.20 3.92L17.79 4.59L18.34 5.16L18.92 5.53L19.60 5.68L20.39 5.67L21.28 5.60L22.20 5.62L23.05 5.82L23.73 6.27L24.18 6.95L24.38 7.80L24.40 8.72L24.33 9.61L24.32 10.40L24.47 11.08L24.84 11.66L25.41 12.21L26.08 12.80L26.72 13.46L27.18 14.20L27.35 15.00L27.18 15.80L26.72 16.54L26.08 17.20L25.41 17.79L24.84 18.34L24.47 18.92L24.32 19.60L24.33 20.39L24.40 21.28L24.38 22.20L24.18 23.05L23.73 23.73L23.05 24.18L22.20 24.38L21.28 24.40L20.39 24.33L19.60 24.32L18.92 24.47L18.34 24.84L17.79 25.41L17.20 26.08L16.54 26.72L15.80 27.18L15.00 27.35L14.20 27.18L13.46 26.72L12.80 26.08L12.21 25.41L11.66 24.84L11.08 24.47L10.40 24.32L9.61 24.33L8.72 24.40L7.80 24.38L6.95 24.18L6.27 23.73L5.82 23.05L5.62 22.20L5.60 21.28L5.67 20.39L5.68 19.60L5.53 18.92L5.16 18.34L4.59 17.79L3.92 17.20L3.28 16.54L2.82 15.80L2.65 15.00L2.82 14.20L3.28 13.46L3.92 12.80L4.59 12.21L5.16 11.66L5.53 11.08L5.68 10.40L5.67 9.61L5.60 8.72L5.62 7.80L5.82 6.95L6.27 6.27L6.95 5.82L7.80 5.62L8.72 5.60L9.61 5.67L10.40 5.68L11.08 5.53L11.66 5.16L12.21 4.59L12.80 3.92L13.46 3.28L14.20 2.82z"/><circle cx="15" cy="15" r="3.900"/></svg>
<div class="abs" style="left:1724px;top:897px;width:41px;height:25px;border-radius:13px;background:#365f3b"><div class="abs" style="left:19px;top:3px;width:19px;height:19px;border-radius:10px;background:#666"></div></div>
<div class="abs" style="left:400px;top:944px;width:1408px;height:1px;background:#5d5d5d"></div>
<div class="t" style="left:416px;top:971px;font-size:20px;color:#333;letter-spacing:.3px">10G-3</div>
<div class="abs" style="left:1512px;top:969px;width:22px;height:22px;border-radius:11px;background:#5c232c"></div>
<svg class="abs" style="left:1675.900px;top:964.200px" width="30" height="30" viewBox="0 0 30 30" fill="none" stroke="#262626" stroke-width="1.500" stroke-linejoin="round"><path d="M15.00 2.65L15.80 2.82L16.54 3.28L17.20 3.92L17.79 4.59L18.34 5.16L18.92 5.53L19.60 5.68L20.39 5.67L21.28 5.60L22.20 5.62L23.05 5.82L23.73 6.27L24.18 6.95L24.38 7.80L24.40 8.72L24.33 9.61L24.32 10.40L24.47 11.08L24.84 11.66L25.41 12.21L26.08 12.80L26.72 13.46L27.18 14.20L27.35 15.00L27.18 15.80L26.72 16.54L26.08 17.20L25.41 17.79L24.84 18.34L24.47 18.92L24.32 19.60L24.33 20.39L24.40 21.28L24.38 22.20L24.18 23.05L23.73 23.73L23.05 24.18L22.20 24.38L21.28 24.40L20.39 24.33L19.60 24.32L18.92 24.47L18.34 24.84L17.79 25.41L17.20 26.08L16.54 26.72L15.80 27.18L15.00 27.35L14.20 27.18L13.46 26.72L12.80 26.08L12.21 25.41L11.66 24.84L11.08 24.47L10.40 24.32L9.61 24.33L8.72 24.40L7.80 24.38L6.95 24.18L6.27 23.73L5.82 23.05L5.62 22.20L5.60 21.28L5.67 20.39L5.68 19.60L5.53 18.92L5.16 18.34L4.59 17.79L3.92 17.20L3.28 16.54L2.82 15.80L2.65 15.00L2.82 14.20L3.28 13.46L3.92 12.80L4.59 12.21L5.16 11.66L5.53 11.08L5.68 10.40L5.67 9.61L5.60 8.72L5.62 7.80L5.82 6.95L6.27 6.27L6.95 5.82L7.80 5.62L8.72 5.60L9.61 5.67L10.40 5.68L11.08 5.53L11.66 5.16L12.21 4.59L12.80 3.92L13.46 3.28L14.20 2.82z"/><circle cx="15" cy="15" r="3.900"/></svg>
<div class="abs" style="left:1724px;top:968px;width:41px;height:25px;border-radius:13px;background:#365f3b"><div class="abs" style="left:19px;top:3px;width:19px;height:19px;border-radius:10px;background:#666"></div></div>
<!-- sidebar scrollbar -->
<div class="abs" style="left:317px;top:85px;width:21px;height:903px;background:#656565"></div>
<div class="abs" style="left:317px;top:106px;width:21px;height:624px;background:#575757"></div>
<svg class="abs" style="left:321px;top:90px" width="13" height="10" viewBox="0 0 13 10" fill="none" stroke="#303030" stroke-width="2.600"><path d="M1.500 8.500l5-5 5 5"/></svg>
<svg class="abs" style="left:321px;top:973px" width="13" height="10" viewBox="0 0 13 10" fill="none" stroke="#303030" stroke-width="2.600"><path d="M1.500 1.500l5 5 5-5"/></svg>
<!--/MAIN-->
<!--MODAL-->
<div id="modal" class="abs">
 <div id="mhead" class="abs"></div>
 <div class="t" style="left:38px;top:25px;font-size:24px;color:#fff;letter-spacing:1.15px">Port 2 Configuration</div>
 <svg class="abs" style="left:967px;top:17px" width="16" height="16" viewBox="0 0 16 16" fill="none" stroke="#b3bed8" stroke-width="2"><path d="M1.500 1.500l13 13M14.500 1.500l-13 13"/></svg>
 <!-- scrollbar -->
 <div class="abs" style="left:979px;top:73px;width:21px;height:869px;background:#f1f1f1"></div>
 <div class="abs" style="left:979px;top:94px;width:21px;height:549px;background:#cdcdcd"></div>
 <svg class="abs" style="left:983px;top:77px" width="13" height="10" viewBox="0 0 13 10" fill="none" stroke="#505050" stroke-width="2.600"><path d="M1.500 8.500l5-5 5 5"/></svg>
 <svg class="abs" style="left:983px;top:927px" width="13" height="10" viewBox="0 0 13 10" fill="none" stroke="#505050" stroke-width="2.600"><path d="M1.500 1.500l5 5 5-5"/></svg>
 <!-- port info -->
 <svg class="abs" style="left:41px;top:93px" width="56" height="56" viewBox="0 0 56 56" fill="none" stroke="#5a88ca" stroke-width="2.500" stroke-linejoin="round" stroke-linecap="round"><rect x="2.500" y="2.700" width="51" height="50.700" rx="10"/><path d="M22.500 2.700v6.800h-4.300v5.500h-8.800v29.200h37.200V15h-8.900V9.500h-4.300V2.700"/></svg>
 <div class="t" style="left:119px;top:95px;font-size:24px;font-weight:700;color:#222">Port 2</div>
 <div class="t" style="left:119px;top:129px;font-size:18px;color:#222;letter-spacing:-.18px">2.5GbE Port</div>
 <div class="abs" style="left:601px;top:89px;width:1px;height:64px;background:#dcdcdc"></div>
 <div class="t" style="left:633px;top:98px;font-size:18px;color:#555;letter-spacing:-.5px">Tx:</div>
 <div class="t" style="left:633px;top:128px;font-size:18px;color:#555;letter-spacing:-.5px">Rx:</div>
 <div class="t" style="left:805px;top:98px;font-size:18px;color:#555;letter-spacing:-.45px">TxPkt:</div>
 <div class="t" style="left:805px;top:128px;font-size:18px;color:#555;letter-spacing:-.45px">RxPkt:</div>
 <div class="t" style="left:697px;top:98px;font-size:18px;color:#0a3791;letter-spacing:.15px">0.00 <span style="color:#222">bps</span></div>
 <div class="t" style="left:697px;top:128px;font-size:18px;color:#0a3791;letter-spacing:.15px">0.00 <span style="color:#222">bps</span></div>
 <div class="t" style="left:894px;top:98px;font-size:18px;color:#0a3791">0</div>
 <div class="t" style="left:894px;top:128px;font-size:18px;color:#0a3791">0</div>
 <svg class="abs" style="left:670px;top:96px" width="20" height="20" viewBox="0 0 20 20"><circle cx="10" cy="10" r="10" fill="#eaf7e1"/><path d="M10 4.200l3 3.800h-6z" fill="#55b70a"/><path d="M10 7v9" stroke="#55b70a" stroke-width="1.600" stroke-dasharray="3.500 1.200"/></svg>
 <svg class="abs" style="left:670px;top:126px" width="20" height="20" viewBox="0 0 20 20"><circle cx="10" cy="10" r="10" fill="#e2f1f8"/><path d="M10 15.800l3-3.800h-6z" fill="#1390c8"/><path d="M10 13V4" stroke="#1390c8" stroke-width="1.600" stroke-dasharray="3.500 1.200"/></svg>
 <svg class="abs" style="left:868px;top:96px" width="20" height="20" viewBox="0 0 20 20"><circle cx="10" cy="10" r="10" fill="#eaf7e1"/><path d="M10 4.200l3 3.800h-6z" fill="#55b70a"/><path d="M10 7v9" stroke="#55b70a" stroke-width="1.600" stroke-dasharray="3.500 1.200"/></svg>
 <svg class="abs" style="left:868px;top:126px" width="20" height="20" viewBox="0 0 20 20"><circle cx="10" cy="10" r="10" fill="#e2f1f8"/><path d="M10 15.800l3-3.800h-6z" fill="#1390c8"/><path d="M10 13V4" stroke="#1390c8" stroke-width="1.600" stroke-dasharray="3.500 1.200"/></svg>
 <div class="hr" style="left:0;top:169px;width:979px;background:#d8d8d8"></div>
 <!-- enable interface -->
 <div class="cb" style="left:61px;top:200px"><svg width="20" height="20" viewBox="0 0 20 20"><path d="M6 10.100l2.500 2.600 5.500-5.800" fill="none" stroke="#fff" stroke-width="2.200" stroke-linejoin="miter"/></svg></div>
 <div class="t lbl" style="left:94px;top:200px;letter-spacing:0.3px">Enable Interface</div>
 <div class="hr" style="left:49px;top:245px;width:911px"></div>
 <!-- form -->
 <div class="t lbl" style="left:49px;top:288px;letter-spacing:0.48px">Interface:</div>
 <div class="inp sel" style="left:365px;top:278px;width:437px;height:39px;padding-left:16px;letter-spacing:-.5px">LAN<svg class="car" width="10" height="13" viewBox="0 0 10 13"><path d="M5 0l5 5H0zM5 13l5-5H0z" fill="#343a40"/></svg></div>
 <div class="t lbl" style="left:49px;top:339px;letter-spacing:0.44px">Interface Name:</div>
 <div class="inp" style="left:365px;top:329px;width:437px;letter-spacing:-.5px">LAN1</div>
 <div class="t lbl" style="left:49px;top:389px;letter-spacing:0.49px">Description:</div>
 <div class="inp" style="left:365px;top:380px;width:437px"></div>
 <div class="t lbl" style="left:49px;top:440px;letter-spacing:-0.16px">MTU:</div>
 <div class="inp" style="left:365px;top:431px;width:200px">1500<div class="abs" style="left:165px;top:7px;width:23px;height:22px;background:#e9e8ee"></div><svg class="abs" style="left:171px;top:10px" width="11" height="16" viewBox="0 0 11 16" fill="none" stroke="#85849a" stroke-width="1.700" stroke-linecap="round" stroke-linejoin="round"><path d="M1.500 5.500l4-4 4 4M1.500 10.500l4 4 4-4"/></svg></div>
 <div class="t" style="left:38px;top:494px;font-size:23px;font-weight:700;color:#222;letter-spacing:-.26px">IP Address Assignment</div>
 <!-- tabs -->
 <div class="t" style="left:68px;top:546px;font-size:20px;color:#495057;letter-spacing:-.1px">IPv4</div>
 <div class="t" style="left:174px;top:546px;font-size:20px;color:#495057;letter-spacing:-.1px">IPv6</div>
 <div class="abs" style="left:38px;top:576px;width:100px;height:5px;background:#0a3791"></div>
 <div class="hr" style="left:19px;top:581px;width:941px"></div>
 <!-- ipv4 -->
 <div class="t lbl" style="left:49px;top:629px;letter-spacing:0.05px">Fixed IP address:</div>
 <div class="inp" style="left:355px;top:620px;width:422px;border-color:#80bdff;box-shadow:0 0 0 3.500px rgba(0,123,255,.25);letter-spacing:-.12px">192.168.200.1<div class="abs" style="left:109px;top:7px;width:1px;height:23px;background:#111"></div></div>
 <div class="t lbl" style="left:49px;top:680px;letter-spacing:0.31px">Subnet mask:</div>
 <div class="inp" style="left:355px;top:671px;width:422px;height:38px;padding-left:15px;letter-spacing:-.1px">255.255.255.0 (/24)<svg class="car" style="top:11px" width="10" height="13" viewBox="0 0 10 13"><path d="M5 0l5 5H0zM5 13l5-5H0z" fill="#343a40"/></svg></div>
 <div class="hr" style="left:49px;top:729px;width:881px"></div>
 <div class="cb" style="left:61px;top:755px"><svg width="20" height="20" viewBox="0 0 20 20"><path d="M6 10.100l2.500 2.600 5.500-5.800" fill="none" stroke="#fff" stroke-width="2.200" stroke-linejoin="miter"/></svg></div>
 <div class="t lbl" style="left:94px;top:755px;letter-spacing:0.01px">Enable DHCP server service</div>
 <div class="t lbl" style="left:49px;top:809px;letter-spacing:0.15px">Start IP address:</div>
 <div class="inp" style="left:355px;top:800px;width:422px">192.168.200</div>
 <div class="t lbl" style="left:49px;top:857px;letter-spacing:0.0px">End IP address:</div>
 <div class="inp" style="left:355px;top:848px;width:422px">192.168.200</div>
 <div class="t lbl" style="left:49px;top:906px;letter-spacing:0.15px">Lease time:</div>
 <div class="inp" style="left:355px;top:896px;width:129px;height:39px;padding-left:16px">1<svg class="car" width="10" height="13" viewBox="0 0 10 13"><path d="M5 0l5 5H0zM5 13l5-5H0z" fill="#343a40"/></svg></div>
 <div class="t lbl" style="left:504px;top:906px;letter-spacing:0.15px">days</div>
 <div class="inp" style="left:585px;top:896px;width:118px;height:39px;padding-left:16px">0<svg class="car" width="10" height="13" viewBox="0 0 10 13"><path d="M5 0l5 5H0zM5 13l5-5H0z" fill="#343a40"/></svg></div>
 <div class="t lbl" style="left:723px;top:906px;letter-spacing:0.79px">hours</div>
 <!-- footer -->
 <div class="abs" style="left:0;top:942px;width:1000px;height:88px;background:#fff"></div>
 <div class="abs btn" style="left:722px;top:961px;width:113px;height:50px;background:#0a3791;color:#fff"><span>Apply</span></div>
 <div class="abs" style="left:0;top:0;width:1000px;height:1030px;border:1px solid rgba(0,0,0,.2);border-radius:5px"></div>
 <div class="abs btn" style="left:848px;top:961px;width:121px;height:50px;background:#fff;color:#222;border:1px solid #6c6c6c;line-height:48px"><span>Cancel</span></div>
</div>
<!--/MODAL-->
</body></html>
